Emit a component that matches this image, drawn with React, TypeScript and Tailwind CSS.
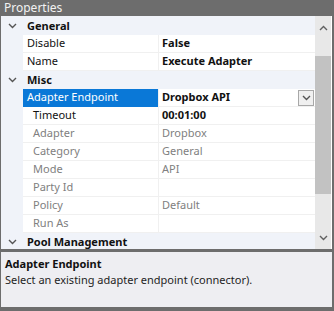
import React from 'react';

type Row =
    | { kind: 'cat'; label: string }
    | { kind: 'prop'; name: string; value?: string; sub?: boolean; readonly?: boolean; selected?: boolean };

const rows: Row[] = [
    { kind: 'cat', label: 'General' },
    { kind: 'prop', name: 'Disable', value: 'False' },
    { kind: 'prop', name: 'Name', value: 'Execute Adapter' },
    { kind: 'cat', label: 'Misc' },
    { kind: 'prop', name: 'Adapter Endpoint', value: 'Dropbox API', selected: true },
    { kind: 'prop', name: 'Timeout', value: '00:01:00', sub: true },
    { kind: 'prop', name: 'Adapter', value: 'Dropbox', sub: true, readonly: true },
    { kind: 'prop', name: 'Category', value: 'General', sub: true, readonly: true },
    { kind: 'prop', name: 'Mode', value: 'API', sub: true, readonly: true },
    { kind: 'prop', name: 'Party Id', value: '', sub: true, readonly: true },
    { kind: 'prop', name: 'Policy', value: 'Default', sub: true, readonly: true },
    { kind: 'prop', name: 'Run As', value: '', sub: true, readonly: true },
    { kind: 'cat', label: 'Pool Management' },
];

function Chevron({ up = false, className = '' }: { up?: boolean; className?: string }) {
    return (
        <svg width="9" height="6" viewBox="0 0 9 6" className={className}>
            <path
                d={up ? 'M1 5 L4.5 1.5 L8 5' : 'M1 1 L4.5 4.5 L8 1'}
                fill="none"
                stroke="currentColor"
                strokeWidth="1.4"
            />
        </svg>
    );
}

export default function App() {
    return (
        <div
            className="w-[334px] h-[311px] bg-[#6d6d6d] flex flex-col overflow-hidden text-[11px]"
            style={{ fontFamily: '"Noto Sans", "Open Sans", sans-serif' }}
        >
            {/* title */}
            <div className="h-[16px] leading-[15px] px-[4px] text-[12px] text-[#f2f2f2]">Properties</div>

            {/* grid + scrollbar */}
            <div className="ml-[1px] mr-[2px] h-[233px] flex overflow-hidden bg-white">
                <div className="w-[314px] flex flex-col pt-[1px] bg-[#f0f3f9]">
                    {rows.map((r, i) =>
                        r.kind === 'cat' ? (
                            <div key={i} className="h-[18px] shrink-0 flex items-center bg-[#f0f3f9]">
                                <div className="w-[22px] flex justify-center pl-[1px] text-[#555]">
                                    <Chevron />
                                </div>
                                <span className="pl-[4px] font-bold text-[#111]">{r.label}</span>
                            </div>
                        ) : (
                            <div key={i} className="h-[18px] shrink-0 flex">
                                <div className="w-[22px] shrink-0" />
                                <div
                                    className={`w-[135px] shrink-0 flex items-center border-b ${
                                        r.selected
                                            ? 'bg-[#0a78d7] text-white border-[#0a78d7]'
                                            : r.readonly
                                              ? 'bg-white text-[#808080] border-[#f0f0f0]'
                                              : 'bg-white text-[#111] border-[#f0f0f0]'
                                    } ${r.sub ? 'pl-[10px]' : 'pl-[4px]'}`}
                                >
                                    {r.name}
                                </div>
                                <div className="w-[1px] bg-[#f0f0f0]" />
                                <div
                                    className={`flex-1 flex items-center justify-between pl-[3px] pr-[1px] bg-white border-b border-[#f0f0f0] ${
                                        r.readonly ? 'text-[#808080]' : 'font-bold text-[#111]'
                                    }`}
                                >
                                    <span>{r.value}</span>
                                    {r.selected && (
                                        <div className="w-[16px] h-[16px] border border-[#a8a8a8] bg-[#f0f0f0] flex items-center justify-center text-[#555]">
                                            <Chevron />
                                        </div>
                                    )}
                                </div>
                            </div>
                        ),
                    )}
                </div>
                <div className="w-[16px] bg-[#e8e8e8] flex flex-col items-center text-[#606060]">
                    <div className="h-[18px] flex items-end pb-[3px]">
                        <Chevron up />
                    </div>
                    <div className="h-[22px]" />
                    <div className="w-full h-[138px] bg-[#c2c2c2]" />
                    <div className="flex-1" />
                    <div className="h-[16px] flex items-start pt-[2px]">
                        <Chevron />
                    </div>
                </div>
            </div>

            {/* description */}
            <div className="mt-[3px] ml-[1px] mr-[2px] h-[55px] bg-[#eeeef2] px-[4px] pt-[4px] leading-[16px]">
                <div className="font-bold text-[#111]">Adapter Endpoint</div>
                <div className="text-[#1e1e1e]">Select an existing adapter endpoint (connector).</div>
            </div>
        </div>
    );
}
